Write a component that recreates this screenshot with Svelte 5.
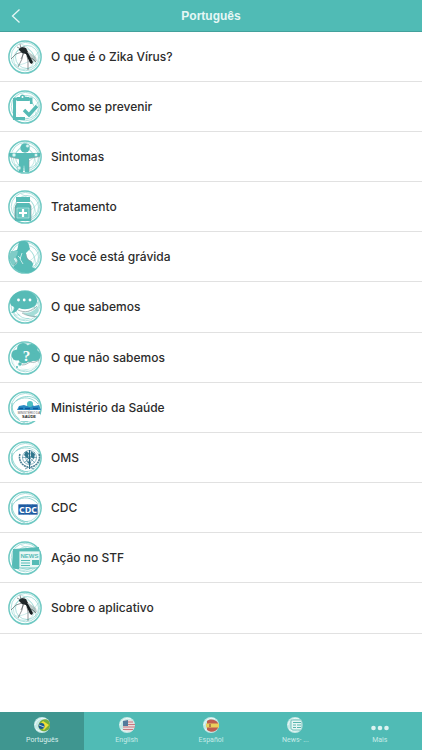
<script>
    let active = "pt";

    const items = [
        { icon: "mosquito", label: "O que é o Zika Vírus?" },
        { icon: "clipboard", label: "Como se prevenir" },
        { icon: "body", label: "Sintomas" },
        { icon: "bottle", label: "Tratamento" },
        { icon: "pregnant", label: "Se você está grávida" },
        { icon: "chat", label: "O que sabemos" },
        { icon: "question", label: "O que não sabemos" },
        { icon: "ministry", label: "Ministério da Saúde" },
        { icon: "who", label: "OMS" },
        { icon: "cdc", label: "CDC" },
        { icon: "news", label: "Ação no STF" },
        { icon: "mosquito", label: "Sobre o aplicativo" },
    ];

    const tabs = [
        { id: "pt", label: "Português" },
        { id: "en", label: "English" },
        { id: "es", label: "Español" },
        { id: "news", label: "News- ..." },
        { id: "more", label: "Mais" },
    ];

    const logos = ["ministry", "who", "cdc"];
</script>

<div class="app">
    <header>
        <button class="back" aria-label="Voltar">
            <svg viewBox="0 0 10 16"><path d="M8.5 1.5L1.5 8l7 6.5" /></svg>
        </button>
        <h1>Português</h1>
        <span></span>
    </header>

    <main>
        <ul>
            {#each items as item}
                <li>
                    <a href="#{item.icon}">
                        <svg class="icon" viewBox="0 0 34 34" aria-hidden="true">
                            <circle cx="17" cy="17" r="16.5" fill="#fff" />
                            <g fill="none" stroke="#6fc9c3">
                                <circle cx="17" cy="17" r="16.1" stroke-width="1.5" />
                                <circle cx="17.4" cy="16.6" r="14.2" stroke-width=".8" opacity=".7" />
                                {#if logos.includes(item.icon)}
                                    <path d="M31 11C25 3 12 4 6 12s1 16 11 20M4 12c-1 10 6 18 16 19M8 10c7-5 16-4 22 3" stroke-width=".9" opacity=".8" />
                                {:else}
                                    <circle cx="19" cy="17" r="11.5" stroke-width=".8" opacity=".7" />
                                    <circle cx="16" cy="19" r="10.5" stroke-width=".7" opacity=".6" />
                                    <path d="M13 4c9 3 15 12 15 22M6 25c9 1 20-5 24-13" stroke-width=".6" opacity=".6" />
                                {/if}
                            </g>

                            {#if item.icon == "mosquito"}
                                <path d="M16 9l12 8 1 4-3 1-9-9z" fill="#9fb0af" opacity=".7" />
                                <g fill="none" stroke="#4a5355" stroke-width=".6" stroke-linejoin="round">
                                    <path d="M14 12L8 14l-5 5M15 13l-1 6-4 8M19 16l1 5v9M16 13l-3 6M20 17l5 2 3 3M13 9L9 7M13 9l-1-5M16 9V6" />
                                </g>
                                <path d="M11 9l3-2 4 1 2 4-2 2-4-1-3-3z" fill="#22292b" />
                                <path d="M17 12l3 1 5 9-1 2-2-1z" fill="#171f21" />
                            {:else if item.icon == "clipboard"}
                                <path d="M6 9h17v5" fill="none" stroke="#56bbb6" stroke-width="3" />
                                <path d="M8 11h14v10l-4 7H8z" fill="#fff" opacity=".85" />
                                <path d="M6.5 8v20.5H17" fill="none" stroke="#56bbb6" stroke-width="3" />
                                <path d="M9 11V7h3c0-3 5-3 5 0h4v4z" fill="#56bbb6" />
                                <circle cx="14.5" cy="7" r="1" fill="#fff" />
                                <path d="M16 20l5 5 8-9" fill="none" stroke="#fff" stroke-width="5" />
                                <path d="M16 20l5 5 8-9" fill="none" stroke="#56bbb6" stroke-width="3.4" />
                            {:else if item.icon == "body"}
                                <circle cx="17" cy="8" r="4.7" fill="#56bbb6" />
                                <path d="M1 13h31v3.5l-11 2V32h-4l-1-7-1 7h-4V19L1 16.500z" fill="#56bbb6" />
                                <path d="M2 17l9 2M21 18.500l11-2M21 20v11" stroke="#849c9e" stroke-width=".6" />
                                <g fill="#dff4f2" stroke="#56bbb6" stroke-width=".6">
                                    <circle cx="19.500" cy="6" r="1.800" />
                                    <circle cx="6" cy="15" r="2" />
                                    <circle cx="28" cy="15" r="1.800" />
                                    <circle cx="11" cy="28" r="2" />
                                </g>
                            {:else if item.icon == "bottle"}
                                <path d="M8 7h14v5H8zM9 13h12l2 3v15H7V16z" fill="#56bbb6" />
                                <path d="M9 13v2l-2 2v13M21 13l2 3v14" fill="none" stroke="#819b9e" stroke-width=".7" />
                                <path d="M9 18h12v10H9z" fill="#65c5bf" stroke="#dff4f2" stroke-width=".5" />
                                <path d="M15 19v8M11 23h8" stroke="#fff" stroke-width="2.2" />
                            {:else if item.icon == "pregnant"}
                                <path d="M11 2c5-2 10-1 10 4l1 3-4 4c0 3 1 5 3 7 4 2 5 4 3 7l4 2c-6 6-17 5-23-2l4-4c1-2 0-4-2-6-2 2-4 3-6 2 0-5 3-8 8-9 1-2 1-5 2-8z" fill="#56bbb6" />
                                <path d="M3 11h7l-1 4-3 4 3 5-4 2C0 20 1 15 3 11z" fill="#7fccc7" />
                                <path d="M14 13l-2 6 3 5M10 16l3 3" fill="none" stroke="#d5efed" stroke-width=".9" />
                                <path d="M18 14l1 5 5 3M10 21l-4 4" fill="none" stroke="#879c9f" stroke-width=".6" />
                            {:else if item.icon == "chat"}
                                <path d="M8 21c6 3 16 2 21-5l3 4c-3 9-14 12-24 1z" fill="#fff" />
                                <path d="M14 22c7 2 13-1 15-6 4 4 1 8-3 9l3 2c-6 0-11-1-15-5z" fill="#a5ddd8" />
                                <path d="M2 12C3 4 11 1 17 1c8 0 13 6 12 11-1 6-11 9-18 6-2 3-4 5-8 5 2-2 4-4 3-6-3-1-4-3-4-5z" fill="#56bbb6" />
                                <path d="M10 20c6 3 14 2 19-4M14 23c5 3 9 3 15 4" fill="none" stroke="#8b9fa0" stroke-width=".7" />
                                <g fill="#fff">
                                    <circle cx="10.5" cy="10" r="1.4" />
                                    <circle cx="16.2" cy="10" r="1.4" />
                                    <circle cx="22" cy="10" r="1.4" />
                                </g>
                            {:else if item.icon == "question"}
                                <path d="M5 19l24-1 2 5-9 6-15-2z" fill="#fff" opacity=".8" />
                                <g fill="#56bbb6">
                                    <circle cx="15" cy="8" r="6" />
                                    <circle cx="23.500" cy="9" r="6" />
                                    <circle cx="9" cy="14" r="5.500" />
                                    <circle cx="16" cy="16" r="6.500" />
                                    <circle cx="27" cy="14.500" r="5.500" />
                                    <circle cx="22" cy="16" r="5" />
                                    <circle cx="12" cy="23" r="1.800" />
                                    <circle cx="9" cy="26" r="1" />
                                </g>
                                <path d="M14 24c4 0 6-2 8-3 4 1 6 0 9-2" fill="none" stroke="#869da0" stroke-width=".7" />
                                <text x="18.500" y="20" class="mark">?</text>
                            {:else if item.icon == "ministry"}
                                <path d="M9 19h23v9l-2 2H12z" fill="#fff" />
                                <path d="M9 19l2-4 5-1 3 1 3-3 4 3 5-1 2 5z" fill="#2b8cc4" />
                                <circle cx="22" cy="13" r="3" fill="#4dc0c2" />
                                <path d="M11 17.500h4M17 17.500h5M25 17.500h5" stroke="#0e5b9d" stroke-width="1.500" />
                                <text x="21" y="23" class="small">MINISTÉRIO DA</text>
                                <text x="21" y="26.500" class="small strong">SAÚDE</text>
                            {:else if item.icon == "who"}
                                <circle cx="21.500" cy="18" r="10" fill="#fff" opacity=".75" />
                                <g fill="none" stroke="#5b94a8" stroke-width=".7">
                                    <circle cx="21.500" cy="16.500" r="7" />
                                    <circle cx="21.500" cy="16.500" r="4" />
                                    <path d="M14 16.500h15M16 11l11 11M27 11L16 22" />
                                </g>
                                <path d="M18 10l3 2-1 4 2 3-3-2-3-3zM23 10l4 3-1 5-3-2zM18 20l5 1-1 3z" fill="#31768d" />
                                <path d="M12 13c-2 6 2 12 8 13M31 13c2 6-2 12-8 13" fill="none" stroke="#4c8195" stroke-width="1.600" stroke-dasharray="2 .6" />
                                <path d="M21 9h1.200v19H21z" fill="#276b85" />
                                <path d="M17 28l4-2 5 2" fill="none" stroke="#4c8195" stroke-width=".8" />
                            {:else if item.icon == "cdc"}
                                <path d="M10 13h20v11H10z" fill="#1d5aa0" stroke="#fff" stroke-width=".7" />
                                <path d="M11 24l9-11M15 24l10-11M21 24l8-9" stroke="#3d7abb" stroke-width=".5" />
                                <text x="20" y="22" class="logo">CDC</text>
                            {:else if item.icon == "news"}
                                <path d="M5 8h6v20H8c-3 0-4-2-4-4z" fill="#56bbb6" />
                                <path d="M6 8l25-2v4H11v17H7z" fill="#56bbb6" />
                                <path d="M11 10h21v13c-1 4-4 4-6 4H11z" fill="#e9f7f5" stroke="#56bbb6" stroke-width=".8" />
                                <path d="M13 19.500h9M13 22h9M13 24.500h9" stroke="#56bbb6" stroke-width="1" />
                                <path d="M24 19h7v5h-7z" fill="#56bbb6" />
                                <text x="21.500" y="17" class="paper">NEWS</text>
                            {/if}
                        </svg>
                        {item.label}
                    </a>
                </li>
            {/each}
        </ul>
    </main>

    <nav>
        {#each tabs as tab}
            <button class:active={active == tab.id} on:click={() => (active = tab.id)}>
                <svg viewBox="0 0 16 16" aria-hidden="true">
                    {#if tab.id == "more"}
                        <g fill="#dcf3f1">
                            <circle cx="1.5" cy="11" r="2.3" />
                            <circle cx="8" cy="11" r="2.3" />
                            <circle cx="14.5" cy="11" r="2.3" />
                        </g>
                    {:else}
                        <circle cx="8" cy="8" r="8" fill="#c5e9e6" />
                        <path d="M1 8c1-5 6-8 11-6M2 12c4 3 9 3 12-1" fill="none" stroke="#eefaf9" stroke-width="1" />
                    {/if}
                    {#if tab.id == "pt"}
                        <path d="M8 3c5-2 8 1 8 5 0 5-4 7-8 6-4-1-5-8 0-11z" fill="#75ad3c" />
                        <path d="M4 9l5-5 6 4-5 5z" fill="#f0df39" />
                        <circle cx="7.5" cy="9" r="3" fill="#195b91" />
                        <path d="M5 8l5 2" stroke="#fff" stroke-width=".7" />
                    {:else if tab.id == "en"}
                        <path d="M4 4c4-2 10-2 11 2 2 4-1 8-4 9l-7-2z" fill="#e8dfdf" />
                        <path d="M4 5h10M4 7.5h12M4 10h12M4 12.5h10" stroke="#c97880" stroke-width="1.2" />
                        <path d="M4 4l5-1v6H4z" fill="#547a9c" />
                    {:else if tab.id == "es"}
                        <path d="M4 4c4-3 9-1 11 2v5c-2 4-7 5-11 2z" fill="#bd5d50" />
                        <path d="M3 6.5h13v4H3z" fill="#ead05d" />
                        <path d="M6 7h2v3H6z" fill="#b18449" />
                    {:else if tab.id == "news"}
                        <path d="M4 3h11v10H6c-2 0-2-2-2-3z" fill="#e5f6f4" stroke="#58b5ae" stroke-width=".8" />
                        <path d="M6 5.500h8M6 8h3M6 10.500h3M10 8h4M10 10.500h4" stroke="#58b5ae" stroke-width="1" />
                    {/if}
                </svg>
                {tab.label}
            </button>
        {/each}
    </nav>
</div>

<style>
    :global(body) {
        margin: 0;
        background: #fff;
    }
    .app {
        display: flex;
        flex-direction: column;
        min-height: 100vh;
        font-family: Inter, "Liberation Sans", sans-serif;
        color: #2c2c2c;
    }
    header {
        display: grid;
        grid-template-columns: 40px 1fr 40px;
        align-items: center;
        box-sizing: border-box;
        height: 32px;
        background: #50bbb5;
        border-bottom: 1px solid #43a19c;
    }
    h1 {
        margin: 0;
        font-family: "Liberation Sans", sans-serif;
        font-size: 12px;
        line-height: 16px;
        font-weight: bold;
        text-align: center;
        color: #e6f7f5;
    }
    button {
        border: 0;
        padding: 0;
        background: none;
        font: inherit;
        cursor: pointer;
    }
    .back {
        display: flex;
        padding-left: 11px;
    }
    .back svg {
        width: 10px;
        height: 16px;
        fill: none;
        stroke: #e6f7f5;
        stroke-width: 1.3;
    }
    main {
        flex: 1;
    }
    ul {
        list-style: none;
        margin: 0;
        padding: 0;
    }
    li {
        border-bottom: 1px solid #e1e1e1;
    }
    /* slightly taller group breaks in the middle and at the end */
    li:nth-child(6n) {
        padding-bottom: 1px;
    }
    li a {
        display: flex;
        align-items: center;
        gap: 9px;
        height: 49px;
        padding: 0 8px;
        font-size: 12px;
        font-weight: 500;
        color: inherit;
        text-decoration: none;
    }
    .icon {
        width: 34px;
        height: 34px;
        flex: none;
    }
    .icon text {
        text-anchor: middle;
    }
    .mark {
        font: bold 15px "Liberation Serif", serif;
        fill: #fff;
    }
    .small {
        font: 3px "Liberation Sans", sans-serif;
        fill: #555;
    }
    .strong {
        font-size: 4px;
        font-weight: bold;
        fill: #222;
    }
    .logo {
        font: bold 9px "Open Sans", sans-serif;
        fill: #fff;
    }
    .paper {
        font: bold 6px "Liberation Sans", sans-serif;
        fill: #56bbb6;
    }
    nav {
        display: flex;
        height: 38px;
        background: #50bbb5;
    }
    nav button {
        flex: 1;
        display: flex;
        flex-direction: column;
        align-items: center;
        gap: 3px;
        padding-top: 5px;
        font-family: Roboto, "Liberation Sans", sans-serif;
        font-size: 7px;
        line-height: 9px;
        color: #c6ebe8;
    }
    nav .active {
        background: #3f9690;
        color: #d9efed;
    }
    nav svg {
        width: 16px;
        height: 16px;
        overflow: visible;
    }
</style>
